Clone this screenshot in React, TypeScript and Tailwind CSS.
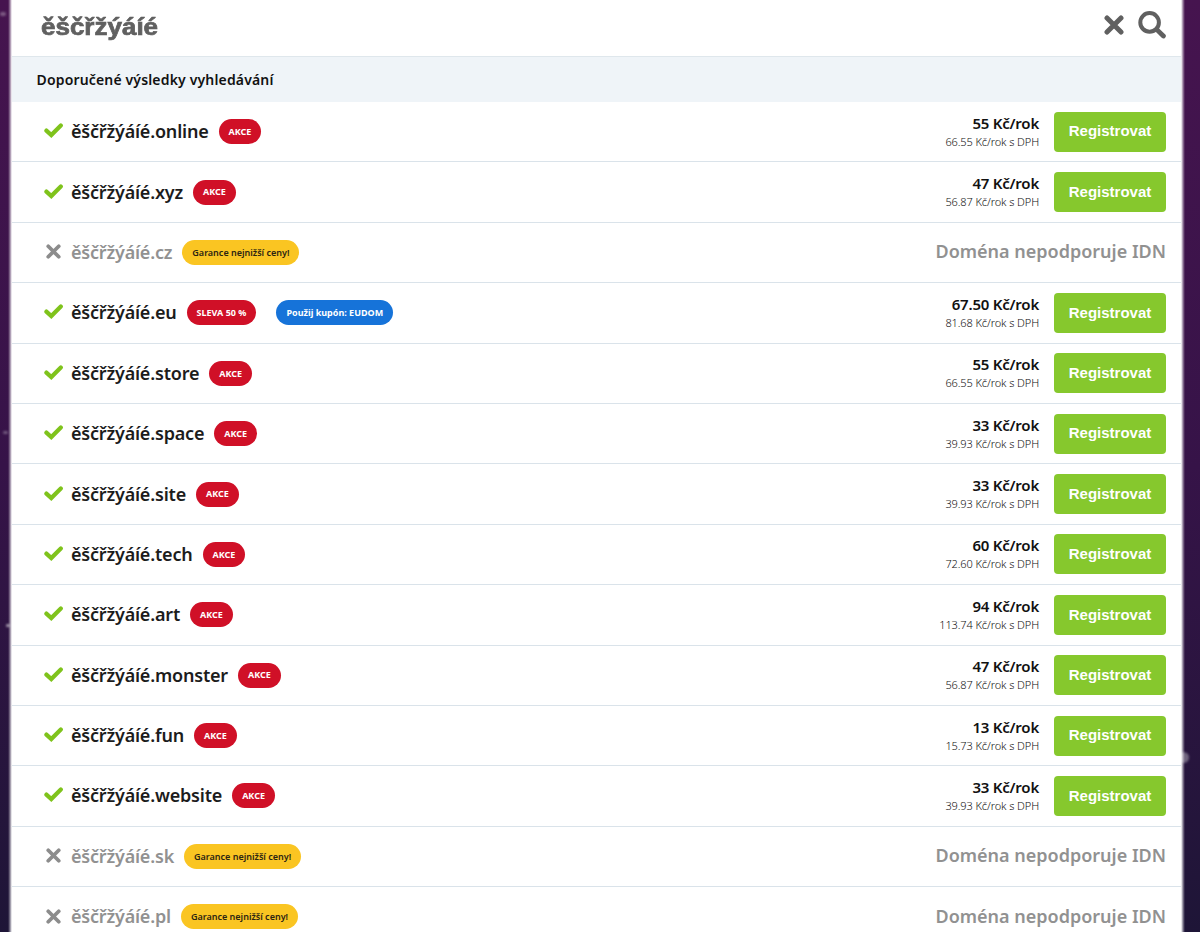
interface Badge {
  label: string;
  tone: "sale" | "coupon" | "guarantee";
}

interface Domain {
  tld: string;
  badges: Badge[];
  price?: string;
  priceVat?: string;
}

const QUERY = "ěščřžýáíé";

const akce: Badge = { label: "AKCE", tone: "sale" };
const guarantee: Badge = { label: "Garance nejnižší ceny!", tone: "guarantee" };

const domains: Domain[] = [
  { tld: "online", badges: [akce], price: "55", priceVat: "66.55" },
  { tld: "xyz", badges: [akce], price: "47", priceVat: "56.87" },
  { tld: "cz", badges: [guarantee] },
  {
    tld: "eu",
    badges: [
      { label: "SLEVA 50 %", tone: "sale" },
      { label: "Použij kupón: EUDOM", tone: "coupon" },
    ],
    price: "67.50",
    priceVat: "81.68",
  },
  { tld: "store", badges: [akce], price: "55", priceVat: "66.55" },
  { tld: "space", badges: [akce], price: "33", priceVat: "39.93" },
  { tld: "site", badges: [akce], price: "33", priceVat: "39.93" },
  { tld: "tech", badges: [akce], price: "60", priceVat: "72.60" },
  { tld: "art", badges: [akce], price: "94", priceVat: "113.74" },
  { tld: "monster", badges: [akce], price: "47", priceVat: "56.87" },
  { tld: "fun", badges: [akce], price: "13", priceVat: "15.73" },
  { tld: "website", badges: [akce], price: "33", priceVat: "39.93" },
  { tld: "sk", badges: [guarantee] },
  { tld: "pl", badges: [guarantee] },
];

const badgeTones = {
  sale: "bg-[#d01027] text-white font-bold",
  coupon: "bg-[#1673d9] text-white font-bold",
  guarantee: "bg-[#fac522] text-[#2b2412] font-semibold",
};

const CheckIcon = () => (
  <svg width="20" height="16" viewBox="0 0 20 16" fill="none" stroke="#7fc31c" strokeWidth="4.2" strokeLinecap="round" strokeLinejoin="miter">
    <path d="M2.4 7.6 7.3 12 16.8 2.6" />
  </svg>
);

const CrossIcon = ({ size }: { size: number }) => (
  <svg width={size} height={size} viewBox="0 0 20 20" fill="none" stroke="currentColor" strokeWidth="5" strokeLinecap="round">
    <path d="M3 3 17 17M17 3 3 17" />
  </svg>
);

const SearchIcon = () => (
  <svg width="28" height="28" viewBox="0 0 28 28" fill="none" stroke="currentColor">
    <circle cx="11.6" cy="11.4" r="9.3" strokeWidth="4" />
    <path d="M18.6 18.4 25.4 25" strokeWidth="4.8" strokeLinecap="round" />
  </svg>
);

const DomainBadge = ({ label, tone }: Badge) => (
  <span
    className={`flex h-[25px] items-center rounded-full px-[10px] text-[9px] whitespace-nowrap ${badgeTones[tone]}`}
  >
    {label}
  </span>
);

const DomainRow = ({ tld, badges, price, priceVat }: Domain) => {
  const available = Boolean(price);

  return (
    <li className="flex h-[60.4px] shrink-0 items-center border-b border-[#dae3ea] pr-[15px] pl-8">
      <span className={`flex w-[27px] shrink-0 pb-px text-[#8c8c8c] ${available ? "" : "pl-[2px]"}`}>
        {available ? <CheckIcon /> : <CrossIcon size={15} />}
      </span>
      <span
        className={`text-[18px] font-semibold tracking-[-0.2px] ${available ? "text-[#1c1c1c]" : "text-[#919191]"}`}
      >
        {QUERY}.{tld}
      </span>
      <div className="ml-[10px] flex gap-5">
        {badges.map((badge) => (
          <DomainBadge key={badge.label} {...badge} />
        ))}
      </div>

      {available ? (
        <div className="ml-auto flex items-center gap-[15px]">
          <div className="pb-px text-right">
            <div className="mb-px text-[15px] leading-[20px] font-semibold tracking-[-0.22px] text-[#111]">
              {price} Kč/rok
            </div>
            <div className="text-[11px] leading-[16px] font-light tracking-[-0.1px] text-[#111]">
              {priceVat} Kč/rok s DPH
            </div>
          </div>
          <button className="h-10 w-28 rounded bg-[#86c82d] font-[Liberation_Sans,Arial,sans-serif] text-[15px] font-bold text-white">
            Registrovat
          </button>
        </div>
      ) : (
        <span className="ml-auto pb-px text-[18px] font-semibold text-[#919191]">Doména nepodporuje IDN</span>
      )}
    </li>
  );
};

export default function App() {
  return (
    <div className="relative h-[932px] overflow-hidden bg-linear-to-b from-[#46144f] via-[#361348] to-[#1e1537] pr-[19px] pl-3 font-['Noto_Sans','Open_Sans',sans-serif]">
      {/* stars in the page background */}
      <span className="absolute top-3 left-0 h-1 w-1.5 rounded-full bg-white/30 blur-[1px]" />
      <span className="absolute top-[431px] left-[3px] h-[3px] w-[5px] rounded-full bg-white/30 blur-[1px]" />
      <span className="absolute top-[624px] left-[6px] h-[3px] w-[4px] rounded-full bg-white/60 blur-[1px]" />
      <span className="absolute top-[752px] left-[1178px] size-[11px] rounded-full bg-white/35 blur-[1px]" />

      <main className="relative h-full bg-white shadow-[0_0_0_1px_rgba(255,255,255,0.7),0_0_0_2px_rgba(255,255,255,0.4),0_0_0_3px_rgba(255,255,255,0.25),0_0_0_4px_rgba(255,255,255,0.1)]">
        <header className="flex h-14 items-center pr-[15px] pb-[6px] pl-[29px] text-[#606060]">
          <span className="mr-auto origin-left scale-x-113 pt-1 font-[Liberation_Sans,Arial,sans-serif] text-[23px] font-bold [-webkit-text-stroke:0.7px_#606060]">
            {QUERY}
          </span>
          <CrossIcon size={20} />
          <span className="ml-[14px]">
            <SearchIcon />
          </span>
        </header>
        <h2 className="flex h-[46px] items-center border-t border-[#dfe7ec] bg-[#eff4f8] pl-[24.5px] text-[14px] font-semibold tracking-[0.16px] text-[#111]">
          Doporučené výsledky vyhledávání
        </h2>
        <ul>
          {domains.map((domain) => (
            <DomainRow key={domain.tld} {...domain} />
          ))}
        </ul>
      </main>
    </div>
  );
}
